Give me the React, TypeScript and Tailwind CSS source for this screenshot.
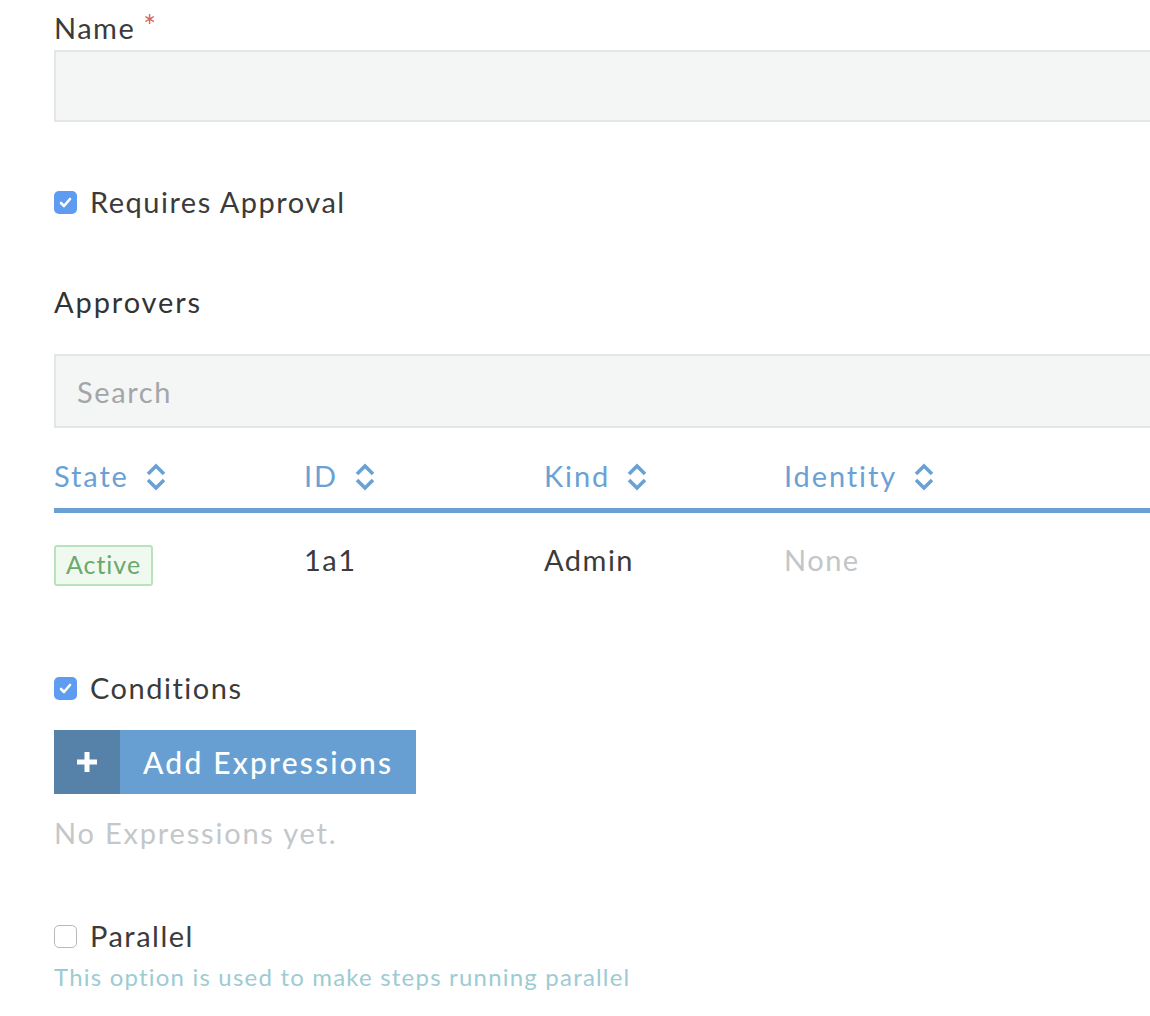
import { useState } from 'react';

const SortIcon = () => (
  <svg width="20" height="30" viewBox="0 0 20 30" className="ml-[17px] mt-[2px]">
    <path d="M2 12 L10 4 L18 12" fill="none" stroke="#6aa1d5" strokeWidth="3.6" />
    <path d="M2 18 L10 26 L18 18" fill="none" stroke="#6aa1d5" strokeWidth="3.6" />
  </svg>
);

const CheckBox = ({ checked, onClick }: { checked: boolean; onClick: () => void }) =>
  checked ? (
    <span onClick={onClick} className="w-[23px] h-[23px] rounded-[5px] bg-[#5d9cf0] flex items-center justify-center cursor-pointer">
      <svg width="15" height="15" viewBox="0 0 15 15">
        <path d="M3 8 L6 11 L12 4" fill="none" stroke="white" strokeWidth="2.6" strokeLinecap="round" strokeLinejoin="round" />
      </svg>
    </span>
  ) : (
    <span onClick={onClick} className="w-[23px] h-[23px] rounded-[5px] border border-[#b9b9b9] bg-white cursor-pointer" />
  );

const columns = ['State', 'ID', 'Kind', 'Identity'];

const App = () => {
  const [approval, setApproval] = useState(true);
  const [conditions, setConditions] = useState(true);
  const [parallel, setParallel] = useState(false);

  return (
    <div className="w-[1150px] h-[1016px] overflow-hidden bg-white text-[#3b3b3b]" style={{ fontFamily: 'Lato, "Open Sans", sans-serif' }}>
      <div className="pl-[54px] pt-[8px] flex flex-col w-[1200px]">
        <div className="h-[40px] flex items-center text-[29px] tracking-[1.5px]">
          Name <span className="text-[#d9625a] ml-[8px] text-[30px] -mt-[6px]">*</span>
        </div>
        <input className="mt-[2px] h-[72px] w-full border-2 border-[#e3e5e8] bg-[#f4f5f5] outline-none px-[20px] text-[28px]" />

        <label className="mt-[60px] h-[40px] flex items-center gap-[13px] text-[29px]">
          <CheckBox checked={approval} onClick={() => setApproval(!approval)} />
          <span className="tracking-[1.5px]">Requires Approval</span>
        </label>

        <div className="mt-[60px] h-[40px] flex items-center text-[29px] text-[#333] tracking-[1.9px]">Approvers</div>

        <input
          placeholder="Search"
          className="mt-[32px] h-[74px] w-full border-2 border-[#e3e5e8] bg-[#f4f5f5] outline-none px-[21px] text-[29px] tracking-[1.6px] placeholder:text-[#a3a6a9]"
        />

        <div className="mt-[28px] w-[1100px]">
          <div className="flex h-[40px] items-center text-[29px] text-[#6aa1d5] tracking-[1.9px]">
            {columns.map((c, i) => (
              <div key={c} className={`flex items-center ${i === 0 ? 'w-[250px]' : 'w-[240px]'}`}>
                {c}
                <SortIcon />
              </div>
            ))}
          </div>
          <div className="mt-[12px] h-[5px] bg-[#6aa1d5]" />
          <div className="flex items-center mt-[30px] h-[41px] text-[29px] tracking-[1.5px]">
            <div className="w-[250px]">
              <span className="inline-flex items-center justify-center w-[99px] h-[41px] rounded-[3px] border-2 border-[#b8e3bb] bg-[#eff9f0] text-[#6aa86d] text-[25px] tracking-[1px]">
                Active
              </span>
            </div>
            <div className="w-[240px] mb-[8px]">1a1</div>
            <div className="w-[240px] mb-[8px]">Admin</div>
            <div className="w-[240px] mb-[8px] text-[#c3c6c8]">None</div>
          </div>
        </div>

        <label className="mt-[84px] h-[40px] flex items-center gap-[13px] text-[29px]">
          <CheckBox checked={conditions} onClick={() => setConditions(!conditions)} />
          <span className="tracking-[1.5px]">Conditions</span>
        </label>

        <button className="mt-[22px] h-[64px] w-[362px] flex bg-[#689fd3] text-white text-[30px] font-medium">
          <span className="w-[66px] h-full bg-[#5682aa] flex items-center justify-center">
            <svg width="26" height="26" viewBox="0 0 26 26">
              <path d="M13 3 V23 M3 13 H23" stroke="white" strokeWidth="5" />
            </svg>
          </span>
          <span className="flex-1 flex items-center pl-[23px] tracking-[2.2px]">Add Expressions</span>
        </button>

        <div className="mt-[19px] h-[40px] flex items-center text-[29px] text-[#c4c7c9] tracking-[1.8px]">No Expressions yet.</div>

        <label className="mt-[63px] h-[40px] flex items-center gap-[13px] text-[29px]">
          <CheckBox checked={parallel} onClick={() => setParallel(!parallel)} />
          <span className="tracking-[1.5px]">Parallel</span>
        </label>
        <div className="mt-[5px] h-[32px] flex items-center text-[24px] text-[#9dcbd3] tracking-[1.2px]">This option is used to make steps running parallel</div>
      </div>
    </div>
  );
};

export default App;
